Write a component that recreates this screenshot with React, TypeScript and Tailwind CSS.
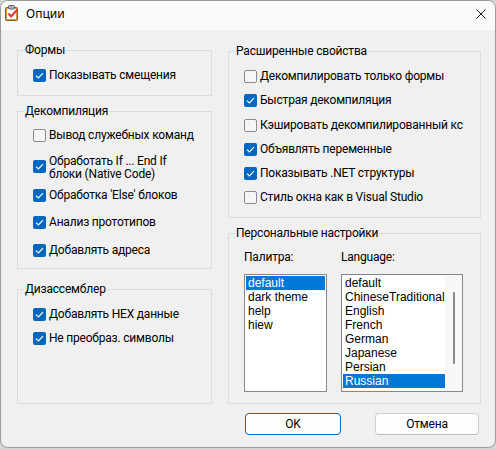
import React from "react";

const BODY = "[font-family:Roboto,'Liberation_Sans',sans-serif]";
const LIST = "[font-family:'Liberation_Sans',Arial,sans-serif] tracking-normal";

function Box({ checked }: { checked: boolean }) {
  if (checked) {
    return (
      <span className="w-[13px] h-[13px] rounded-[2px] bg-[#0067c0] flex items-center justify-center shrink-0">
        <svg width="9" height="7" viewBox="0 0 9 7">
          <path d="M1 3.6 L3.4 6 L8 1.2" stroke="#ffffff" strokeWidth="1.2" fill="none" />
        </svg>
      </span>
    );
  }
  return <span className="w-[13px] h-[13px] rounded-[2px] border border-[#8a8a8a] bg-[#f6f6f6] shrink-0" />;
}

function Row({ checked, label, mt }: { checked: boolean; label: string; mt: string }) {
  return (
    <div className={`flex items-center h-[16px] pl-[15px] gap-[3px] ${mt}`}>
      <Box checked={checked} />
      <span className="whitespace-nowrap leading-[16px]">{label}</span>
    </div>
  );
}

function Group({ title, className, children }: { title: string; className: string; children?: React.ReactNode }) {
  return (
    <div className={`relative border border-[#dcdcdc] shrink-0 ${className}`}>
      <span className="absolute left-[6px] -top-[8px] px-[1px] bg-[#f0f0f0] leading-[14px] whitespace-nowrap">
        {title}
      </span>
      {children}
    </div>
  );
}

function ListItem({ text, selected }: { text: string; selected?: boolean }) {
  return (
    <div
      className={`h-[14px] leading-[14px] pl-[2px] whitespace-nowrap overflow-hidden ${
        selected ? "bg-[#0078d7] text-white" : ""
      }`}
    >
      {text}
    </div>
  );
}

export default function App() {
  const palette = ["default", "dark theme", "help", "hiew"];
  const langs = ["default", "ChineseTraditional", "English", "French", "German", "Japanese", "Persian", "Russian"];
  return (
    <div className="w-[496px] h-[449px] bg-[#d4d4d4]">
      <div
        className={`w-[496px] h-[448px] rounded-[8px] border border-[#9c9c9c] bg-[#f0f0f0] overflow-hidden flex flex-col text-[12px] tracking-[-0.2px] text-black ${BODY}`}
      >
        {/* Title bar */}
        <div className="h-[29px] bg-[#fafafa] flex items-start pl-[4px] pr-[9px] shrink-0">
          <svg width="14" height="16" viewBox="0 0 14 16" className="mt-[4px] shrink-0">
            <rect x="0.5" y="2.5" width="12" height="13" rx="1" fill="#d89a4a" stroke="#8a5a24" />
            <rect x="2" y="4" width="9" height="10" fill="#ffffff" />
            <rect x="3.5" y="0.5" width="6" height="3.5" rx="1" fill="#aab2bc" stroke="#5d6670" />
            <path d="M3.5 8.5 L6 11.5 L12.5 4.5" stroke="#e2352b" strokeWidth="2" fill="none" />
          </svg>
          <span className="ml-[7px] mt-[5px] leading-[16px] text-[12px] tracking-normal [font-family:'Noto_Sans',sans-serif]">
            Опции
          </span>
          <svg width="10" height="10" viewBox="0 0 10 10" className="ml-auto mt-[8px]">
            <path d="M0.5 0.5 L9.5 9.5 M9.5 0.5 L0.5 9.5" stroke="#1a1a1a" strokeWidth="1" />
          </svg>
        </div>

        {/* Body */}
        <div className="flex pl-[16px] pt-[20px] gap-[16px]">
          {/* Left column */}
          <div className="w-[195px] flex flex-col">
            <Group title="Формы" className="h-[46px] pt-[16px]">
              <Row checked label="Показывать смещения" mt="" />
            </Group>
            <Group title="Декомпиляция" className="h-[158px] mt-[15px] pt-[15px]">
              <Row checked={false} label="Вывод служебных команд" mt="" />
              <div className="flex items-start pl-[15px] gap-[3px] mt-[12px] h-[26px]">
                <span className="mt-[5px]">
                  <Box checked />
                </span>
                <span className="leading-[13px] whitespace-nowrap">
                  Обработать If ... End If
                  <br />
                  блоки (Native Code)
                </span>
              </div>
              <Row checked label="Обработка 'Else' блоков" mt="mt-[6px]" />
              <Row checked label="Анализ прототипов" mt="mt-[11px]" />
              <Row checked label="Добавлять адреса" mt="mt-[12px]" />
            </Group>
            <Group title="Дизассемблер" className="h-[115px] mt-[20px] pt-[16px]">
              <Row checked label="Добавлять HEX данные" mt="" />
              <Row checked label="Не преобраз. символы" mt="mt-[8px]" />
            </Group>
          </div>

          {/* Right column */}
          <div className="w-[253px] flex flex-col">
            <Group title="Расширенные свойства" className="h-[167px] mt-[1px] pt-[16px]">
              <Row checked={false} label="Декомпилировать только формы" mt="" />
              <Row checked label="Быстрая декомпиляция" mt="mt-[8px]" />
              <Row checked={false} label="Кэшировать декомпилированный кс" mt="mt-[9px]" />
              <Row checked label="Объявлять переменные" mt="mt-[8px]" />
              <Row checked label="Показывать .NET структуры" mt="mt-[8px]" />
              <Row checked={false} label="Стиль окна как в Visual Studio" mt="mt-[8px]" />
            </Group>
            <Group title="Персональные настройки" className="h-[171px] mt-[15px] pt-[15px] pl-[15px]">
              <div className="flex gap-[14px]">
                <div className="w-[83px] flex flex-col">
                  <div className="h-[16px] leading-[16px]">Палитра:</div>
                  <div className={`mt-[9px] h-[118px] border border-[#828790] bg-white p-[1px] ${LIST}`}>
                    {palette.map((p, i) => (
                      <ListItem key={p} text={p} selected={i === 0} />
                    ))}
                  </div>
                </div>
                <div className="w-[122px] flex flex-col">
                  <div className="h-[16px] leading-[16px]">Language:</div>
                  <div className={`mt-[9px] h-[118px] border border-[#828790] bg-white flex ${LIST}`}>
                    <div className="w-[103px] pl-[1px] pt-[1px] overflow-hidden">
                      {langs.map((l, i) => (
                        <ListItem key={l} text={l} selected={i === langs.length - 1} />
                      ))}
                    </div>
                    <div className="flex-1 bg-[#f8f8f8] flex justify-center pt-[17px]">
                      <div className="w-[2px] h-[72px] rounded-full bg-[#8a8a8a]" />
                    </div>
                  </div>
                </div>
              </div>
            </Group>
            <div className="flex pl-[17px] mt-[9px] gap-[34px]">
              <button className="w-[96px] h-[22px] rounded-[4px] border border-[#0067c0] bg-[#fdfdfd] leading-[20px]">
                OK
              </button>
              <button className="w-[104px] h-[22px] rounded-[4px] border border-[#d0d0d0] border-b-[#bdbdbd] bg-[#fdfdfd] leading-[20px]">
                Отмена
              </button>
            </div>
          </div>
        </div>
      </div>
    </div>
  );
}
